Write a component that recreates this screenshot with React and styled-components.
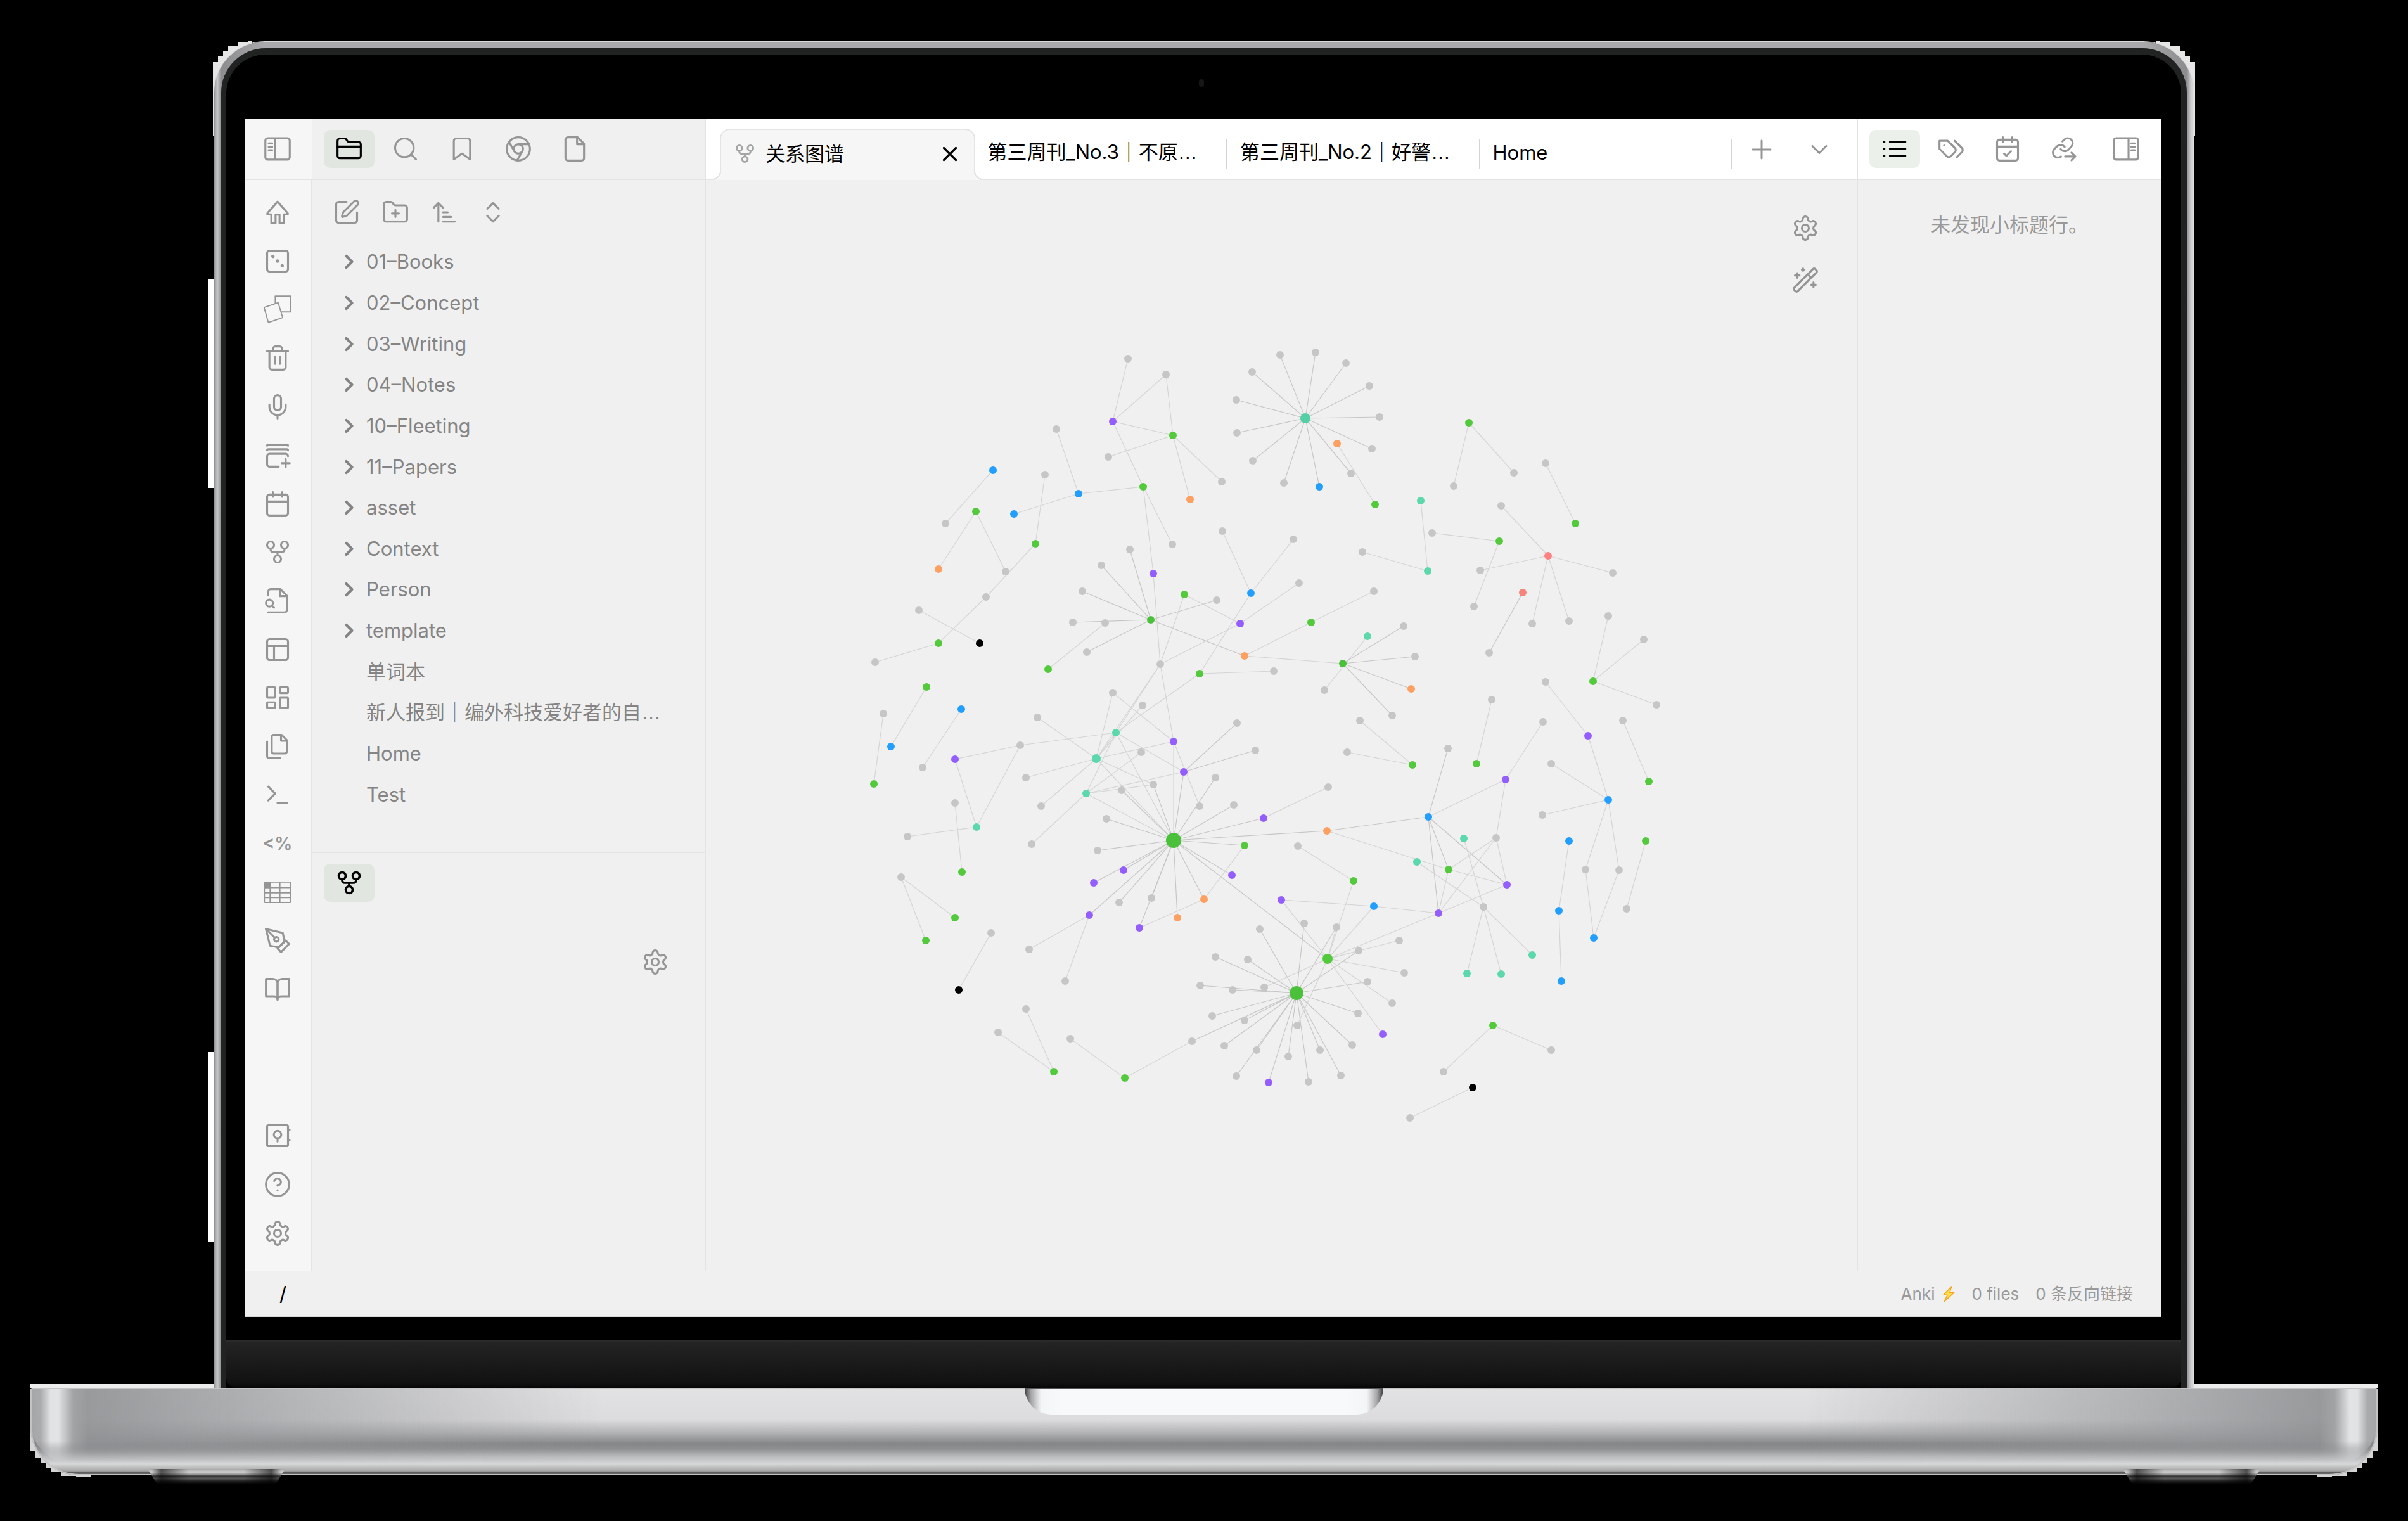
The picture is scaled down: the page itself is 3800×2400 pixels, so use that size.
import React from "react";
import styled, { createGlobalStyle, css } from "styled-components";

const color = {
  ink: "#000000",
  text: "#848484",
  faint: "#999999",
  icon: "#959595",
  line: "#e4e4e4",
  panel: "#f0f0f0",
  ribbon: "#f6f6f6",
  active: "#e1e6e0",
  activeLight: "#ebf0ea",
};

const GlobalStyle = createGlobalStyle`
  *, *::before, *::after { box-sizing: border-box; }
  body { margin: 0; background: #000; }
  body, button {
    font-family: Inter, "Noto Sans CJK SC", sans-serif;
    font-size: 31px;
    line-height: 40px;
  }
  button { margin: 0; padding: 0; border: 0; background: none; color: inherit; cursor: pointer; }
`;

/* ---------- icons ---------- */

const GEAR =
  "M12.22 2h-.44a2 2 0 0 0-2 2v.18a2 2 0 0 1-1 1.73l-.43.25a2 2 0 0 1-2 0l-.15-.08a2 2 0 0 0-2.73.73l-.22.38a2 2 0 0 0 .73 2.73l.15.1a2 2 0 0 1 1 1.72v.51a2 2 0 0 1-1 1.74l-.15.09a2 2 0 0 0-.73 2.73l.22.38a2 2 0 0 0 2.73.73l.15-.08a2 2 0 0 1 2 0l.43.25a2 2 0 0 1 1 1.73V20a2 2 0 0 0 2 2h.44a2 2 0 0 0 2-2v-.18a2 2 0 0 1 1-1.73l.43-.25a2 2 0 0 1 2 0l.15.08a2 2 0 0 0 2.73-.73l.22-.39a2 2 0 0 0-.73-2.73l-.15-.08a2 2 0 0 1-1-1.74v-.5a2 2 0 0 1 1-1.74l.15-.09a2 2 0 0 0 .73-2.73l-.22-.38a2 2 0 0 0-2.73-.73l-.15.08a2 2 0 0 1-2 0l-.43-.25a2 2 0 0 1-1-1.73V4a2 2 0 0 0-2-2z";

const c = (x, y, r) => `M${x - r} ${y}a${r} ${r} 0 1 0 ${2 * r} 0a${r} ${r} 0 1 0 ${-2 * r} 0`;
const r = (x, y, w, h, q = 2) =>
  `M${x + q} ${y}h${w - 2 * q}a${q} ${q} 0 0 1 ${q} ${q}v${h - 2 * q}a${q} ${q} 0 0 1 ${-q} ${q}h${-(w - 2 * q)}a${q} ${q} 0 0 1 ${-q} ${-q}v${-(h - 2 * q)}a${q} ${q} 0 0 1 ${q} ${-q}z`;

const ICONS = {
  panelLeft: [r(1.5, 2.8, 21, 18.4), "M9.8 3v18M4.4 7.3h3M4.4 10.2h3M4.4 13.1h3"],
  panelRight: [r(1.5, 2.8, 21, 18.4), "M14.2 3v18M16.6 7.3h3M16.6 10.2h3M16.6 13.1h3"],
  folder: [
    "M20 20a2 2 0 0 0 2-2V8a2 2 0 0 0-2-2h-7.9a2 2 0 0 1-1.69-.9L9.6 3.9A2 2 0 0 0 7.93 3H4a2 2 0 0 0-2 2v13a2 2 0 0 0 2 2Z",
    "M2 10h20",
  ],
  search: [c(11, 11, 8), "m21 21-4.3-4.3"],
  bookmark: ["m19 21-7-5-7 5V5a2 2 0 0 1 2-2h10a2 2 0 0 1 2 2z"],
  chrome: [c(12, 12, 10), c(12, 12, 4), "M21.17 8H12M3.95 6.06 8.54 14M10.88 21.94 15.46 14"],
  file: ["M14.5 2H6a2 2 0 0 0-2 2v16a2 2 0 0 0 2 2h12a2 2 0 0 0 2-2V7.5z", "M14 2v6h6"],
  edit: [
    "M12 3H5a2 2 0 0 0-2 2v14a2 2 0 0 0 2 2h14a2 2 0 0 0 2-2v-7",
    "M18.375 2.625a1 1 0 0 1 3 3l-9.013 9.014a2 2 0 0 1-.853.505l-2.873.84a.5.5 0 0 1-.62-.62l.84-2.873a2 2 0 0 1 .506-.852z",
  ],
  folderPlus: [
    "M20 20a2 2 0 0 0 2-2V8a2 2 0 0 0-2-2h-7.9a2 2 0 0 1-1.69-.9L9.6 3.9A2 2 0 0 0 7.93 3H4a2 2 0 0 0-2 2v13a2 2 0 0 0 2 2Z",
    "M12 10v6M9 13h6",
  ],
  sort: ["m3 8 4-4 4 4M7 4v16M11 12h4M11 16h7M11 20h10"],
  chevrons: ["m7 15 5 5 5-5M7 9l5-5 5 5"],
  chevronRight: ["m9 18 6-6-6-6"],
  chevronDown: ["m6 9 6 6 6-6"],
  home: ["M12 2.8 3.2 12.8v1h3.4v7.6h3.7v-7.4h3.4v7.4h3.7v-7.6h3.4v-1z"],
  dice: [r(3, 3, 18, 18), c(8, 8, 0.6), c(12, 12, 0.6), c(16, 16, 0.6)],
  shapes: ["M10 7V.7h13.3v13.6H15", "M.4 10.4 12.5 6.3l3.9 12.8L4.1 23.4z"],
  trash: [
    "M3 6h18M19 6v14a2 2 0 0 1-2 2H7a2 2 0 0 1-2-2V6M8 6V4a2 2 0 0 1 2-2h4a2 2 0 0 1 2 2v2M10 11v6M14 11v6",
  ],
  mic: ["M12 2a3 3 0 0 0-3 3v7a3 3 0 0 0 6 0V5a3 3 0 0 0-3-3Z", "M19 10v2a7 7 0 0 1-14 0v-2M12 19v3"],
  cards: [
    "M3 4c0-.7.5-1 1-1h16c.5 0 1 .3 1 1M3 8c0-.7.5-1 1-1h16c.5 0 1 .3 1 1",
    "M21 13a2 2 0 0 0-2-2H5a2 2 0 0 0-2 2v7a2 2 0 0 0 2 2h8",
    "M19 15.5v7M15.5 19h7",
  ],
  calendar: ["M8 2v4M16 2v4M3 10h18", r(3, 4, 18, 18)],
  calendarCheck: ["M8 2v4M16 2v4M3 10h18", r(3, 4, 18, 18), "m9 16 2 2 4-4"],
  fork: [
    c(12, 18, 3),
    c(6, 6, 3),
    c(18, 6, 3),
    "M18 9v1a2 2 0 0 1-2 2H8a2 2 0 0 1-2-2V9M12 12v3",
  ],
  fileSearch: [
    "M4 22h14a2 2 0 0 0 2-2V7.5L14.5 2H6a2 2 0 0 0-2 2v3",
    "M14 2v6h6",
    c(5, 14, 3),
    "m9 18-1.5-1.5",
  ],
  layout: [r(3, 3, 18, 18), "M3 9h18M9 21V9"],
  dashboard: [r(3, 3, 7, 9, 0.5), r(14, 3, 7, 5, 0.5), r(14, 12, 7, 9, 0.5), r(3, 16, 7, 5, 0.5)],
  files: [
    "M15.5 2H8.6c-.4 0-.8.2-1.1.5-.3.3-.5.7-.5 1.1v12.8c0 .4.2.8.5 1.1.3.3.7.5 1.1.5h9.8c.4 0 .8-.2 1.1-.5.3-.3.5-.7.5-1.1V6.5z",
    "M3 7.6v12.8c0 .4.2.8.5 1.1.3.3.7.5 1.1.5h9.8M15 2v5h5",
  ],
  terminal: ["m4 17 6-6-6-6M12 19h8"],
  table: [r(0.7, 3.2, 22.6, 17.6, 0.5), "M5.6 3.2v17.6M14 3.2v17.6M.7 8h22.6M.7 12.4h22.6M.7 16.6h22.6"],
  pen: [
    "m12 19 7-7 3 3-7 7-3-3z",
    "m18 13-1.5-7.5L2 2l3.5 14.5L13 18l5-5z",
    "m2 2 7.586 7.586",
    c(11, 11, 2),
  ],
  book: [
    "M2 3h6a4 4 0 0 1 4 4v14a3 3 0 0 0-3-3H2z",
    "M22 3h-6a4 4 0 0 0-4 4v14a3 3 0 0 1 3-3h7z",
  ],
  vault: [r(3, 3, 18, 18, 1), c(12, 11, 3.2), "M12 14.2V17M21 7h1.4M21 16h1.4"],
  help: [c(12, 12, 10), "M9.09 9a3 3 0 0 1 5.83 1c0 2-3 3-3 3M12 17h.01"],
  gear: [GEAR, c(12, 12, 3)],
  wand: [
    "m21.64 3.64-1.28-1.28a1.21 1.21 0 0 0-1.72 0L2.36 18.64a1.21 1.21 0 0 0 0 1.72l1.28 1.28a1.2 1.2 0 0 0 1.72 0L21.64 5.36a1.2 1.2 0 0 0 0-1.72",
    "m14 7 3 3M5 6v4M19 14v4M10 2v2M7 8H3M21 16h-4M11 3H9",
  ],
  close: ["M18 6 6 18M6 6l12 12"],
  plus: ["M4 12h16M12 4v16"],
  list: ["M8 6h13M8 12h13M8 18h13M3 6h.01M3 12h.01M3 18h.01"],
  tags: [
    "M9 5H2v7l6.29 6.29c.94.94 2.48.94 3.42 0l3.58-3.58c.94-.94.94-2.48 0-3.42z",
    "M6 9.01V9",
    "m15 5 6.3 6.3a2.4 2.4 0 0 1 0 3.4L17 19",
  ],
  linkOut: [
    "M9.2 12.2a4.3 4.3 0 0 0 6.5.5l2.6-2.6a4.3 4.3 0 0 0-6.1-6.1L10.7 5.500",
    "M12.600 10.300a4.300 4.300 0 0 0-6.500-.500l-2.600 2.600a4.300 4.300 0 0 0 6 6.100",
    "M13 18.500h8.500M18.500 15.200l3.300 3.300-3.300 3.300",
  ],
};

function Icon({ name, size = 44, weight = 1.7, children }) {
  return (
    <svg
      width={size}
      height={size}
      viewBox="0 0 24 24"
      fill="none"
      stroke="currentColor"
      strokeWidth={weight}
      strokeLinecap="round"
      strokeLinejoin="round"
      overflow="visible"
      aria-hidden="true"
    >
      {ICONS[name].map((d) => (
        <path key={d} d={d} />
      ))}
      {children}
    </svg>
  );
}

/* ---------- laptop ---------- */

const Page = styled.div`
  min-height: 100vh;
  padding: 66px 48px 58px;
  display: flex;
  flex-direction: column;
  isolation: isolate;
`;

const Lid = styled.div`
  position: relative;
  flex: 1;
  display: flex;
  margin: 0 290px;
  padding: 10px 11px 0;
  border-radius: 80px 80px 0 0;
  background: linear-gradient(90deg, #8e8e90 0, #c9c9cb 5px, #8c8c8e 11px, #a9a9ab 80px, #a9a9ab calc(100% - 80px), #8c8c8e calc(100% - 11px), #c9c9cb calc(100% - 5px), #e0e0e0);
  box-shadow: 0 0 0 1px #d8d8d8;
`;

const Gasket = styled.div`
  flex: 1;
  display: flex;
  min-width: 0;
  padding: 10px 9px 0 8px;
  border-radius: 70px 70px 0 0;
  background: #212222;
`;

const Bezel = styled.div`
  flex: 1;
  display: flex;
  flex-direction: column;
  min-width: 0;
  border-radius: 62px 62px 0 0;
  background: #000;
`;

const CameraStrip = styled.div`
  height: 102px;
  display: flex;
  align-items: center;
  justify-content: center;
  padding: 0 8px 12px 0;
  &::before {
    content: "";
    width: 8px;
    height: 12px;
    border-radius: 6px;
    background: #161616;
  }
`;

const Chin = styled.div`
  height: 75px;
  margin-top: 37px;
  border-top: 2px solid #2a2a2a;
  border-radius: 0 0 16px 16px;
  background: linear-gradient(#242424, #111 90%, #060606);
`;

const Fringe = styled.svg`
  position: absolute;
  z-index: -1;
  top: -2px;
  width: 62px;
  height: 150px;
  ${(p) => (p.$right ? "right: -2px; transform: scaleX(-1);" : "left: -2px;")}
`;

const SideKey = styled.span`
  position: absolute;
  z-index: -1;
  width: 10px;
  left: -10px;
  top: ${(p) => p.$top};
  height: ${(p) => p.$height};
  background: #fff;
`;

const Base = styled.div`
  position: relative;
  height: 138px;
  display: flex;
  justify-content: center;
  border-radius: 4px 4px 76px 76px;
  box-shadow: inset 0 0 0 2px #c4c4c6;
  background: linear-gradient(
    #e2e2e3 0,
    #dcdcde 50px,
    #b4b5b7 70px,
    #858688 88px,
    #8e8f91 96px,
    #b9babc 108px,
    #d6d7d8 120px,
    #b8b8b8 127px,
    #a6a6a6 131px,
    #505050 134px,
    #8a8a8a 138px
  );
  &::before {
    content: "";
    position: absolute;
    inset: 2px 2px 20px;
    border-radius: 0 0 60px 60px;
    background: linear-gradient(
      90deg,
      #a4a6a8 0,
      #a9abad 14px,
      #e2e3e5 30px,
      #e2e3e5 42px,
      #a0a2a4 66px,
      rgba(144, 146, 148, 0.9) 90px,
      rgba(150, 152, 154, 0.75) 280px,
      rgba(170, 172, 174, 0) 900px,
      rgba(170, 172, 174, 0) calc(100% - 900px),
      rgba(150, 152, 154, 0.75) calc(100% - 280px),
      rgba(144, 146, 148, 0.9) calc(100% - 90px),
      #a0a2a4 calc(100% - 66px),
      #e2e3e5 calc(100% - 42px),
      #e2e3e5 calc(100% - 30px),
      #a9abad calc(100% - 14px),
      #a4a6a8 100%
    );
    mask-image: linear-gradient(#000 70%, transparent);
  }
`;

const Shelf = styled.span`
  position: absolute;
  top: -6px;
  width: 290px;
  height: 6px;
  background: #ececec;
  ${(p) => (p.$right ? "right: 0;" : "left: 0;")}
`;

const BaseFringe = styled.svg`
  position: absolute;
  z-index: -1;
  bottom: -2px;
  width: 96px;
  height: 90px;
  ${(p) => (p.$right ? "right: 0; transform: scaleX(-1);" : "left: 0;")}
`;

const Notch = styled.div`
  position: relative;
  width: 566px;
  height: 42px;
  border-top: 2px solid #555;
  border-radius: 0 0 46px 46px;
  background: linear-gradient(90deg, #3c3c3e, #a5a5a7 10px, #f4f5f6 26px, #f8f9fb 60px, #f8f9fb calc(100% - 60px), #f4f5f6 calc(100% - 26px), #a5a5a7 calc(100% - 10px), #3c3c3e);
`;

const Feet = styled.div`
  display: flex;
  justify-content: space-between;
  margin-top: -10px;
  padding: 0 185px;
  z-index: 1;
`;

const Foot = styled.div`
  width: 217px;
  height: 24px;
  clip-path: polygon(0 0, 100% 0, 93% 100%, 7% 100%);
  background:
    linear-gradient(90deg, transparent 3%, rgba(0, 0, 0, 0.6) 10%, transparent 30%, transparent 70%, rgba(0, 0, 0, 0.6) 90%, transparent 97%),
    linear-gradient(#a8a8a8 0, #d0d0d0 5px, #8c8c8c 9px, #333 11px, #5e5e5e 15px, #222 19px, #000);
`;

/* ---------- app shell ---------- */

const Screen = styled.div`
  flex: 1;
  display: flex;
  flex-direction: column;
  margin: 0 32px 0 29px;
  overflow: hidden;
  background: ${color.panel};
  color: ${color.text};
`;

const Workspace = styled.div`
  flex: 1;
  display: flex;
  min-height: 0;
`;

const Header = styled.header`
  flex: none;
  height: 96px;
  display: flex;
  align-items: center;
  gap: 9px;
  border-bottom: 2px solid ${color.line};
  color: ${color.icon};
`;

const iconCell = css`
  display: flex;
  align-items: center;
  justify-content: center;
  color: inherit;
`;

const PaneButton = styled.button`
  ${iconCell}
  flex: none;
  width: 80px;
  height: 60px;
  border-radius: 10px;
  ${(p) => p.$active && css`
    background: ${p.$light ? color.activeLight : color.active};
    color: ${color.ink};
  `}
`;

const Ribbon = styled.aside`
  flex: none;
  width: 106px;
  display: flex;
  flex-direction: column;
  justify-content: space-between;
  background: ${color.ribbon};
  color: ${color.icon};
`;

const RibbonHeader = styled(Header)`
  justify-content: center;
  padding-right: 2px;
`;

const RibbonBody = styled.nav`
  flex: 1;
  display: flex;
  flex-direction: column;
  justify-content: space-between;
  padding: 13px 0 22px;
  border-right: 2px solid ${color.line};
`;

const RibbonGroup = styled.div`
  display: grid;
  grid-auto-rows: 1fr;
  height: ${(p) => p.$height}px;
`;

const RibbonButton = styled.button`
  ${iconCell}
  font-size: 28px;
  font-weight: 600;
`;

const Sidebar = styled.aside`
  flex: none;
  width: 622px;
  display: flex;
  flex-direction: column;
  border-right: 2px solid ${color.line};
`;

const SidebarHeader = styled(Header)`
  padding-left: 19px;
`;

const Explorer = styled.section`
  flex: 1;
  display: flex;
  flex-direction: column;
  padding-bottom: 58px;
`;

const ExplorerTools = styled.div`
  height: 97px;
  display: flex;
  align-items: center;
  padding: 4px 0 0 16px;
  color: ${color.icon};
`;

const ToolButton = styled.button`
  ${iconCell}
  width: 77px;
  height: 60px;
`;

const Tree = styled.ul`
  flex: 1;
  display: grid;
  grid-auto-rows: 1fr;
  margin: 0;
  padding: 0;
  list-style: none;
`;

const TreeRow = styled.li`
  display: flex;
  min-width: 0;
`;

const TreeButton = styled.button`
  flex: 1;
  display: flex;
  align-items: center;
  gap: 9px;
  min-width: 0;
  padding: 0 24px 0 ${(p) => (p.$folder ? 41 : 86)}px;
  text-align: left;
  white-space: nowrap;
`;

const Ellipsis = styled.span`
  font-family: "Liberation Sans", sans-serif;
`;

const LocalGraph = styled.section`
  flex: none;
  height: 662px;
  border-top: 2px solid ${color.line};
  color: ${color.icon};
`;

const LocalGraphHeader = styled.div`
  height: 94px;
  display: flex;
  align-items: center;
  padding-left: 19px;
`;

const LocalGraphBody = styled.div`
  display: flex;
  justify-content: flex-end;
  padding: 48px 40px 0 0;
`;

const Main = styled.main`
  flex: 1;
  display: flex;
  flex-direction: column;
  min-width: 0;
`;

const TabBar = styled(Header)`
  gap: 0;
  align-items: stretch;
  padding: 15px 14px 0 24px;
  background: #fff;
`;

const TabList = styled.div`
  flex: 1;
  display: flex;
  min-width: 0;
`;

const Tab = styled.div`
  position: relative;
  flex: 1;
  display: flex;
  align-items: center;
  min-width: 0;
  color: ${color.ink};
  &::after {
    content: "";
    width: 2px;
    height: 48px;
    background: #d4d4d4;
  }
  ${(p) => p.$active && css`
    margin: 0 0 -2px -2px;
    border: 2px solid ${color.line};
    border-bottom: 0;
    border-radius: 16px 16px 0 0;
    background: ${color.ribbon};
    &::before, &::after {
      content: "";
      position: absolute;
      bottom: 0;
      width: 14px;
      height: 14px;
    }
    &::before {
      left: -14px;
      background: radial-gradient(circle at 0 0, #fff 12px, ${color.line} 12px, ${color.line} 14px, ${color.ribbon} 14px);
    }
    &::after {
      right: -14px;
      background: radial-gradient(circle at 100% 0, #fff 12px, ${color.line} 12px, ${color.line} 14px, ${color.ribbon} 14px);
    }
  `}
`;

const TabLabel = styled.button`
  flex: 1;
  display: flex;
  align-items: center;
  min-width: 0;
  padding: 0 0 4px 20px;
  white-space: nowrap;
  text-align: left;
  svg { margin-right: 15px; color: #a4a4a4; }
`;

const TabClose = styled.button`
  ${iconCell}
  width: 76px;
  height: 60px;
  padding-bottom: 4px;
`;

const TabAction = styled.button`
  ${iconCell}
  width: 91px;
  padding-bottom: 13px;
`;

const GraphView = styled.div`
  position: relative;
  flex: 1;
  min-height: 0;
  contain: size;
`;

const GraphCanvas = styled.svg`
  display: block;
  width: 100%;
  height: 100%;
`;

const GraphControls = styled.div`
  position: absolute;
  top: 35px;
  right: 41px;
  display: grid;
  color: ${color.icon};
`;

const GraphControl = styled.button`
  ${iconCell}
  width: 80px;
  height: 82px;
`;

const Outline = styled.aside`
  flex: none;
  width: 480px;
  border-left: 2px solid ${color.line};
`;

const OutlineHeader = styled(Header)`
  padding: 0 15px 0 18px;
  background: #fff;
  & > :last-child { margin-left: auto; }
`;

const EmptyNote = styled.p`
  margin: 0;
  padding-top: 51px;
  text-align: center;
  color: ${color.faint};
`;

const StatusBar = styled.footer`
  flex: none;
  height: 72px;
  display: flex;
  align-items: center;
  gap: 26px;
  padding: 0 44px 0 55px;
  border-bottom: 1px solid #d8d8d8;
  color: ${color.faint};
  font-size: 26px;
`;

const VaultPath = styled.span`
  margin-right: auto;
  color: ${color.ink};
  font-size: 31px;
`;

const StatusItem = styled.span`
  display: flex;
  align-items: center;
  gap: 12px;
`;

/* ---------- graph data ---------- */

const TONES = {
  g: "#c6c6c6",
  G: "#53c93c",
  H: "#4bc03a",
  p: "#945eff",
  b: "#229eff",
  o: "#fea062",
  k: "#000000",
  t: "#5bd8ac",
  T: "#55cfa5",
  r: "#ff8080",
  s: "#f5857a",
};

// Each sector lists "x,y" points (optionally "x,y,tone,radius"), numbered from 1.
const SECTORS = {
  a: {
    x: 1340, y: 520, sx: 2.306, sy: 2.45,
    points:
      "1014,113 1152,173 960,355,p 1178,409,G 944,493 1069,608,G 1241,657,o 1357,587 754,384 713,561 834,634,b 524,545,b 462,702,G 600,712,b 351,749 678,828,G 326,925,o 570,937 497,1035 253,1086 475,1213,k 324,1213,G 94,1287 281,1381,G 409,1467,b 125,1485 725,1314,G 932,1134 814,1133 864,1247 848,1013 918,911 1021,849 1175,831 1106,944,p 1219,1025,G 1338,1047 1097,1121,H 1133,1293 1275,1331,G 1422,1137,p 1440,1262,o 1462,1019,b 1359,780 1545,1321 960,1403 1068,1453 685,1499 1412,1521 971,1557,t 1467,165 1408,273 1411,399 1470,508",
  },
  b: {
    x: 1960, y: 520, sx: 2.306, sy: 2.45,
    points:
      "230,342,T,8 138,99 267,87 379,130 463,219 501,338 472,460 396,555 281,607,b 153,594 345,442,o 485,676,G 826,361,G 771,606 990,554 1105,517 1212,750,G 651,662,t 675,933,t 437,861 692,787 936,819,G 845,1071 943,681 1114,874,r 868,930 1349,942 1055,1137 1191,1126 1022,1016,s 899,1249 187,810 207,980 479,1013 252,1131,G 456,1185,t 367,1292,H 589,1147 630,1265 615,1390,o 547,1492 299,1395 1333,1107 1463,1197 1277,1360,G 1508,1450 1105,1361 909,1430 430,1511 1096,1517 1387,1511",
  },
  c: {
    x: 1340, y: 1120, sx: 2.306, sy: 2.45,
    points:
      "153,141,b 268,224 89,287,G 386,192,p 622,138 464,453,t 213,489 384,361 410,628,G 190,648 386,803,G 279,891,G 517,862 400,1083,k 899,188,t,7 643,262 699,373 863,324,t 664,519 1181,122,p 1217,241,p 1064,165 1108,290 991,311 937,422 905,543 1181,504,H,12 1334,263 1276,373 1399,367 1507,420,p 1440,524,G 1393,639,p 1291,732,o 1194,804,o 1100,727 1056,844,p 983,745 873,793,p 889,668,p 999,620,p 1477,157 654,926 786,1048 644,1157 542,1247 744,1400,G 804,1271 1002,1424,G 1248,1281 1333,956 1451,965 1277,1066 1394,1084 1511,1073 1321,1183 1438,1200 1365,1299 1483,1316 1410,1415 1526,1440,p 1495,848",
  },
  d: {
    x: 1960, y: 1120, sx: 2.306, sy: 2.376,
    points:
      "199,1061,H,11 311,934,G,8 225,801 343,816 425,904 573,866 591,987 457,1020 547,1100 423,1137 201,1183 402,1257 284,1277 169,1300 359,1371 243,1395 513,1217,p 143,713,p 480,737,b 716,763,p 406,641,G 204,510 309,455,o 314,291 382,160 620,207,G 750,146 679,401,b 854,203,G 959,261,p 924,479 806,483,t 637,571,t 752,598,G 965,656,p 879,739 818,988,t 944,991,t 1055,920,t 1260,97,p 1332,338,b 1126,203 1094,394 1251,598 1372,600 1279,856,b 1191,493,b 1153,754,b 1163,1018,b 1481,269,G 1470,493,G 1399,745 913,1183,G 734,1356 1126,1275 840,1417,k 612,1529",
  },
};

// "hub:leaf leaf …" — one line per hub.
const LINKS = `
a3:a1 a2 a4 a6
a4:a2 a5 a7 a8
a6:a11 a35 a34
a11:a9 a14
a16:a10 a19
a12:a15
a13:a17 a18
a22:a19 a23
a20:a21
a24:c1
a25:c2
a26:c3
a27:a28
a38:a29 a30 a31 a32 a33 a37 a42
a39:a35 a36 a41 a50 c20
a41:a36 b33
a43:a44 b32 a40
a40:a45 a50
a42:b35 b37
b1:a51 a52 a53 a54 b2 b3 b4 b5 b6 b7 b8 b9 b10
b11:b12
b13:b14 b15
b16:b17
b19:b18 b20
b22:b21 b23
b25:b24 b26 b27 b28 b29
b30:b31
b34:b35
b36:b42
b37:b38 b39 b40 b41
b45:b43 b44 b46
b47:d40
b48:d29
d26:b49 d25
d30:b50 d28 d31
b51:d50
c4:c5 c6
c5:c6 a50
c6:c7
c8:c9
c10:c11 c12
c13:c14
c15:a48 a47 a46 a39 a50 c16 c17 c20 c23 c27
c18:a50 c19 c22 c23 c21 c27
a50:c21 c27
a46:c20
c20:c27 c29
c21:a49 c42 c27
c27:c23 c24 c25 c26 c28 c30 c31 c32 c33 c34 c35 c36 c37 c38 c39 c40 c41 d23 d2
c31:d24
c34:c32 c37
c39:c43 c44
c47:c45 c46
c49:c48 c50
d1:c50 c51 c52 c53 c54 c56 c57 c58 c59 c60 c61 c62 d3 d4 d5 d8 d10 d12 d13 d14 d15 d16
d2:c55 d4 d5 d6 d7 d9 d11 d17 d18 d19 d20 d21
d19:d18 d20
d21:d22
d28:d23 d27 d34 d20 d35
d34:d23 d31 d35 d20
d31:d20 d35
d35:d20
d36:d32 d33 d37 d38 d39
d41:d40 d42 d43 d44 d45
d46:d44 d45
d48:d47 d49
d51:d52
d53:d54 d55
d56:d57
`;

const HUBS = new Set(["b1", "c27", "d1", "a38", "b37", "d28", "c21", "b30"]);

const nodes = {};
Object.entries(SECTORS).forEach(([key, s]) => {
  s.points.split(" ").forEach((entry, i) => {
    const [x, y, tone = "g", radius = 6] = entry.split(",");
    nodes[key + (i + 1)] = {
      x: Math.round(s.x + x / s.sx),
      y: Math.round(s.y + y / s.sy),
      fill: TONES[tone],
      radius: Number(radius),
    };
  });
});

const links = LINKS.trim()
  .split("\n")
  .flatMap((line) => {
    const [from, to] = line.split(":");
    return to.split(" ").map((leaf) => ({ from, to: leaf, strong: HUBS.has(from) }));
  });

function Graph() {
  return (
    <GraphCanvas viewBox="1114 284 1816 1722" role="img" aria-label="关系图谱">
      {links.map((l) => (
        <line
          key={l.from + l.to}
          x1={nodes[l.from].x}
          y1={nodes[l.from].y}
          x2={nodes[l.to].x}
          y2={nodes[l.to].y}
          stroke={l.strong ? "#c6c6c6" : "#d4d4d4"}
          strokeWidth="1.2"
        />
      ))}
      {Object.entries(nodes).map(([id, n]) => (
        <circle key={id} cx={n.x} cy={n.y} r={n.radius} fill={n.fill} />
      ))}
    </GraphCanvas>
  );
}

/* ---------- content ---------- */

const RIBBON_TOP = [
  ["home", "主页"], ["dice", "随机笔记"], ["shapes", "画板"], ["trash", "清理"], ["mic", "录音"],
  ["cards", "新建卡片"], ["calendar", "日记"], ["fork", "关系图谱"], ["fileSearch", "快速切换"],
  ["layout", "白板"], ["dashboard", "工作区"], ["files", "模板"], ["terminal", "命令面板"],
  ["templater", "插入模板"], ["table", "表格"], ["pen", "绘图"], ["book", "阅读"],
];
const RIBBON_BOTTOM = [["vault", "仓库"], ["help", "帮助"], ["gear", "设置"]];

const FOLDERS = [
  "01–Books", "02–Concept", "03–Writing", "04–Notes", "10–Fleeting",
  "11–Papers", "asset", "Context", "Person", "template",
];
const NOTES = [
  { title: "单词本" },
  { title: "新人报到｜编外科技爱好者的自", cut: true },
  { title: "Home" },
  { title: "Test" },
];

function Title({ children, cut }) {
  return (
    <span>
      {children}
      {cut && <Ellipsis>…</Ellipsis>}
    </span>
  );
}

function RibbonItem({ name, label }) {
  return (
    <RibbonButton aria-label={label}>
      {name === "templater" ? (
        "<%"
      ) : (
        <Icon name={name} weight={name === "shapes" || name === "table" ? 1 : 1.7}>
          {name === "table" && <rect x="1" y="3.5" width="4.6" height="4.5" fill="currentColor" />}
        </Icon>
      )}
    </RibbonButton>
  );
}

function Bolt() {
  return (
    <svg width="20" height="26" viewBox="0 0 20 26" aria-hidden="true">
      <path
        d="M14.500 1 2 14.200h6.200L3.500 24.500 18.500 10.600h-6.700z"
        fill="#ffe14d"
        stroke="#f9a51a"
        strokeWidth="1.6"
        strokeLinejoin="round"
      />
    </svg>
  );
}

function AppScreen() {
  return (
    <Screen>
      <Workspace>
        <Ribbon>
          <RibbonHeader>
            <PaneButton aria-label="折叠左侧栏"><Icon name="panelLeft" /></PaneButton>
          </RibbonHeader>
          <RibbonBody>
            <RibbonGroup $height={1302}>
              {RIBBON_TOP.map(([name, label]) => <RibbonItem key={name} name={name} label={label} />)}
            </RibbonGroup>
            <RibbonGroup $height={230}>
              {RIBBON_BOTTOM.map(([name, label]) => <RibbonItem key={name} name={name} label={label} />)}
            </RibbonGroup>
          </RibbonBody>
        </Ribbon>

        <Sidebar>
          <SidebarHeader>
            <PaneButton $active aria-label="文件列表"><Icon name="folder" /></PaneButton>
            <PaneButton aria-label="搜索"><Icon name="search" /></PaneButton>
            <PaneButton aria-label="书签"><Icon name="bookmark" /></PaneButton>
            <PaneButton aria-label="浏览器"><Icon name="chrome" /></PaneButton>
            <PaneButton aria-label="文件"><Icon name="file" /></PaneButton>
          </SidebarHeader>
          <Explorer>
            <ExplorerTools>
              <ToolButton aria-label="新建笔记"><Icon name="edit" /></ToolButton>
              <ToolButton aria-label="新建文件夹"><Icon name="folderPlus" /></ToolButton>
              <ToolButton aria-label="排序"><Icon name="sort" /></ToolButton>
              <ToolButton aria-label="全部展开"><Icon name="chevrons" /></ToolButton>
            </ExplorerTools>
            <Tree>
              {FOLDERS.map((name) => (
                <TreeRow key={name}>
                  <TreeButton $folder>
                    <Icon name="chevronRight" size={36} weight={2.8} />
                    {name}
                  </TreeButton>
                </TreeRow>
              ))}
              {NOTES.map((note) => (
                <TreeRow key={note.title}>
                  <TreeButton><Title cut={note.cut}>{note.title}</Title></TreeButton>
                </TreeRow>
              ))}
            </Tree>
          </Explorer>
          <LocalGraph>
            <LocalGraphHeader>
              <PaneButton $active aria-label="局部关系图谱"><Icon name="fork" weight={2} /></PaneButton>
            </LocalGraphHeader>
            <LocalGraphBody>
              <ToolButton aria-label="图谱设置"><Icon name="gear" /></ToolButton>
            </LocalGraphBody>
          </LocalGraph>
        </Sidebar>

        <Main>
          <TabBar>
            <TabList>
              <Tab $active>
                <TabLabel><Icon name="fork" size={35} weight={2} />关系图谱</TabLabel>
                <TabClose aria-label="关闭"><Icon name="close" size={38} weight={2.2} /></TabClose>
              </Tab>
              <Tab><TabLabel><Title cut>第三周刊_No.3｜不原</Title></TabLabel></Tab>
              <Tab><TabLabel><Title cut>第三周刊_No.2｜好警</Title></TabLabel></Tab>
              <Tab><TabLabel>Home</TabLabel></Tab>
            </TabList>
            <TabAction aria-label="新标签页"><Icon name="plus" size={42} /></TabAction>
            <TabAction aria-label="标签列表"><Icon name="chevronDown" size={44} /></TabAction>
          </TabBar>
          <GraphView>
            <Graph />
            <GraphControls>
              <GraphControl aria-label="图谱设置"><Icon name="gear" /></GraphControl>
              <GraphControl aria-label="播放动画"><Icon name="wand" /></GraphControl>
            </GraphControls>
          </GraphView>
        </Main>

        <Outline>
          <OutlineHeader>
            <PaneButton $active $light aria-label="大纲"><Icon name="list" weight={2} /></PaneButton>
            <PaneButton aria-label="标签"><Icon name="tags" /></PaneButton>
            <PaneButton aria-label="日历"><Icon name="calendarCheck" /></PaneButton>
            <PaneButton aria-label="出链"><Icon name="linkOut" /></PaneButton>
            <PaneButton aria-label="折叠右侧栏"><Icon name="panelRight" /></PaneButton>
          </OutlineHeader>
          <EmptyNote>未发现小标题行。</EmptyNote>
        </Outline>
      </Workspace>

      <StatusBar>
        <VaultPath>/</VaultPath>
        <StatusItem>Anki <Bolt /></StatusItem>
        <StatusItem>0 files</StatusItem>
        <StatusItem>0 条反向链接</StatusItem>
      </StatusBar>
    </Screen>
  );
}

const lidSteps = "56,0 56,2 40,2 40,8 24,8 24,16 16,16 16,24 8,24 8,34 0,34 0,150 30,150 62,60 62,0";
const baseSteps = "0,0 0,50 8,50 8,60 16,60 16,68 24,68 24,76 32,76 32,83 48,83 48,89 72,89 72,90 96,90 96,0";

export default function App() {
  return (
    <>
      <GlobalStyle />
      <Page>
        <Lid>
          <Fringe viewBox="0 0 62 150" aria-hidden="true"><polygon points={lidSteps} fill="#e6e6e6" /></Fringe>
          <Fringe $right viewBox="0 0 62 150" aria-hidden="true"><polygon points={lidSteps} fill="#e6e6e6" /></Fringe>
          <SideKey $top="374px" $height="330px" />
          <SideKey $top="1594px" $height="300px" />
          <Gasket>
            <Bezel>
              <CameraStrip />
              <AppScreen />
              <Chin />
            </Bezel>
          </Gasket>
        </Lid>
        <Base>
          <Shelf />
          <Shelf $right />
          <BaseFringe viewBox="0 0 96 90" aria-hidden="true"><polygon points={baseSteps} fill="#d4d4d4" /></BaseFringe>
          <BaseFringe $right viewBox="0 0 96 90" aria-hidden="true"><polygon points={baseSteps} fill="#d4d4d4" /></BaseFringe>
          <Notch />
        </Base>
        <Feet>
          <Foot />
          <Foot />
        </Feet>
      </Page>
    </>
  );
}
